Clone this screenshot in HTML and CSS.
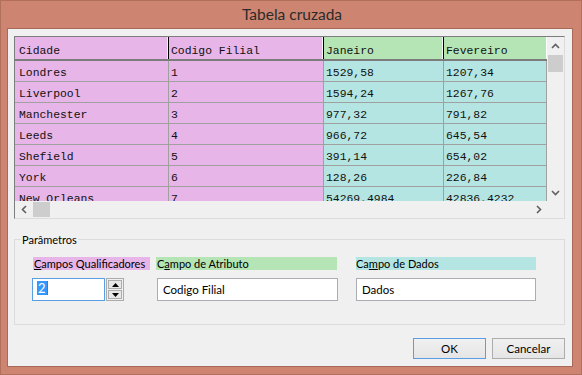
FILE: index.html
```html
<!DOCTYPE html>
<html>
<head>
<meta charset="utf-8">
<link rel="stylesheet" href="styles.css">
</head>
<body>
<div class="window">
  <div class="titlebar">Tabela cruzada</div>
  <div class="client">
    <div class="gridbox">
      <div class="viewport">
        <div class="row head">
          <div class="c pink first">Cidade</div>
          <div class="c pink">Codigo Filial</div>
          <div class="c green">Janeiro</div>
          <div class="c green last">Fevereiro</div>
        </div>
        <div class="row"><div class="c pink first">Londres</div><div class="c pink">1</div><div class="c cyan">1529,58</div><div class="c cyan">1207,34</div></div>
        <div class="row"><div class="c pink first">Liverpool</div><div class="c pink">2</div><div class="c cyan">1594,24</div><div class="c cyan">1267,76</div></div>
        <div class="row"><div class="c pink first">Manchester</div><div class="c pink">3</div><div class="c cyan">977,32</div><div class="c cyan">791,82</div></div>
        <div class="row"><div class="c pink first">Leeds</div><div class="c pink">4</div><div class="c cyan">966,72</div><div class="c cyan">645,54</div></div>
        <div class="row"><div class="c pink first">Shefield</div><div class="c pink">5</div><div class="c cyan">391,14</div><div class="c cyan">654,02</div></div>
        <div class="row"><div class="c pink first">York</div><div class="c pink">6</div><div class="c cyan">128,26</div><div class="c cyan">226,84</div></div>
        <div class="row"><div class="c pink first">New Orleans</div><div class="c pink">7</div><div class="c cyan">54269,4984</div><div class="c cyan">42836,4232</div></div>
      </div>
      <div class="vscroll">
        <div class="sbtn"><svg width="9" height="6" viewBox="0 0 9 6"><polyline points="1,5 4.5,1.5 8,5" fill="none" stroke="#606060" stroke-width="1.6"/></svg></div>
        <div class="vthumb"></div>
        <div class="vtrack"></div>
        <div class="sbtn"><svg width="9" height="6" viewBox="0 0 9 6"><polyline points="1,1 4.5,4.5 8,1" fill="none" stroke="#606060" stroke-width="1.6"/></svg></div>
      </div>
      <div class="hscroll">
        <div class="sbtn"><svg width="6" height="9" viewBox="0 0 6 9"><polyline points="5,1 1.5,4.5 5,8" fill="none" stroke="#606060" stroke-width="1.6"/></svg></div>
        <div class="hthumb"></div>
        <div class="htrack"></div>
        <div class="sbtn"><svg width="6" height="9" viewBox="0 0 6 9"><polyline points="1,1 4.5,4.5 1,8" fill="none" stroke="#606060" stroke-width="1.6"/></svg></div>
      </div>
      <div class="corner"></div>
    </div>

    <fieldset class="group">
      <legend>Parâmetros</legend>
      <div class="fields">
        <div class="lbl lbl1 pink"><u>C</u>ampos Qualificadores</div>
        <div class="lbl lbl2 green">C<u>a</u>mpo de Atributo</div>
        <div class="lbl lbl3 cyan">Ca<u>m</u>po de Dados</div>
        <div class="spin">
          <div class="spinbox"><span class="sel">2</span><span class="caret"></span></div>
          <div class="spinbtns">
            <div class="sb"><svg width="7" height="4" viewBox="0 0 7 4"><polygon points="0,4 3.5,0 7,4" fill="#000"/></svg></div>
            <div class="sb"><svg width="7" height="4" viewBox="0 0 7 4"><polygon points="0,0 3.5,4 7,0" fill="#000"/></svg></div>
          </div>
        </div>
        <div class="tbox tbox2">Codigo Filial</div>
        <div class="tbox tbox3">Dados</div>
      </div>
    </fieldset>

    <div class="buttons">
      <div class="btn default">OK</div>
      <div class="btn">Cancelar</div>
    </div>
  </div>
</div>
</body>
</html>
```

FILE: styles.css
```css
* { box-sizing: border-box; }
html, body { margin: 0; padding: 0; }
body {
  width: 582px;
  height: 375px;
  overflow: hidden;
  font-family: Lato, "Liberation Sans", sans-serif;
  font-size: 11px;
  color: #000;
}
.window {
  width: 582px;
  height: 375px;
  background: #cd8571;
  border: 1px solid #b26f5c;
  display: flex;
  flex-direction: column;
}
.titlebar {
  height: 27px;
  line-height: 27px;
  text-align: center;
  font-size: 15.5px;
  color: #2b2b2b;
  padding-left: 2px;
}
.client {
  margin: 0 8px 7px 6px;
  flex: 1;
  background: #f0f0f0;
  border: 1px solid #a86a58;
  padding: 7px 7px 0 6px;
  display: flex;
  flex-direction: column;
}

/* data grid */
.gridbox {
  width: 551px;
  height: 183px;
  border-top: 1px solid #7d7d7d;
  border-left: 1px solid #7d7d7d;
  border-right: 1px solid #dcdcdc;
  border-bottom: 1px solid #dcdcdc;
  display: grid;
  grid-template-columns: 532px 17px;
  grid-template-rows: 164px 17px;
  background: #f0f0f0;
}
.viewport {
  overflow: hidden;
  background: #fff;
  font-family: "Liberation Mono", monospace;
  font-size: 11.4px;
  color: #111;
}
.row {
  display: grid;
  grid-template-columns: 154px 155px 120px 103px;
  height: 21px;
  border-bottom: 1px solid #a0a0a0;
}
.row .c {
  border-right: 1px solid #a0a0a0;
  padding: 4px 0 0 2px;
  line-height: 16px;
  white-space: nowrap;
  overflow: hidden;
}
.row .c.first { padding-left: 4px; }
.row.head {
  height: 24px;
  border-bottom: 2px solid #7c7c7c;
}
.row.head .c {
  padding-top: 6px;
  border-right: 1px solid #000;
  box-shadow: inset -1px 0 0 #f4f4f4;
}
.row.head .c.last { border-right-color: #fff; box-shadow: none; }
.pink { background: #e7b5e7; }
.green { background: #b5e4b5; }
.cyan { background: #b5e5e2; }

.vscroll {
  display: flex;
  flex-direction: column;
  background: #f0f0f0;
}
.sbtn {
  width: 17px;
  height: 17px;
  flex: none;
  display: flex;
  align-items: center;
  justify-content: center;
}
.vthumb {
  margin: 1px 1px 0 1px;
  width: 15px;
  height: 17px;
  background: #cdcdcd;
  flex: none;
}
.vtrack { flex: 1; }
.hscroll {
  display: flex;
  background: #f0f0f0;
}
.hthumb {
  margin: 1px 0 1px 1px;
  width: 17px;
  height: 15px;
  background: #cdcdcd;
  flex: none;
}
.htrack { flex: 1; }
.corner { background: #f0f0f0; }

/* group box */
.group {
  margin: 13px 0 0 0;
  width: 551px;
  border: 1px solid #dcdcdc;
  padding: 10px 0 23px 0;
  min-width: 0;
}
.group legend {
  margin-left: 6px;
  padding: 0 1px;
  line-height: 15px;
  color: #000;
}
.fields {
  padding-left: 17px;
  display: grid;
  grid-template-columns: 124px 200px 180px;
  grid-template-rows: 13px 23px;
  row-gap: 8px;
}
.lbl {
  line-height: 13px;
  white-space: nowrap;
  overflow: hidden;
}
.lbl u { text-decoration-thickness: 1px; text-underline-offset: 1px; }
.lbl1 { margin-left: 1px; width: 117px; padding-left: 1px; }
.lbl2 { width: 181px; padding-left: 1px; }
.lbl3 { width: 180px; }

.spin { display: flex; }
.spinbox {
  width: 73px;
  height: 23px;
  border: 1px solid #5a9fe6;
  background: #fff;
  padding: 2px 0 0 4px;
  display: flex;
  align-items: flex-start;
}
.sel {
  background: #3399ff;
  color: #fff;
  height: 14px;
  line-height: 14px;
  padding: 0 1px;
  font-size: 13px;
}
.caret {
  width: 1px;
  height: 14px;
  background: #c05a10;
}
.spinbtns {
  margin-left: 1px;
  width: 18px;
  height: 23px;
  border: 1px solid #ababab;
  padding: 1px;
  display: flex;
  flex-direction: column;
  gap: 1px;
  background: #f0f0f0;
}
.sb {
  flex: 1;
  border: 1px solid #acacac;
  background: #e8e8e8;
  display: flex;
  align-items: center;
  justify-content: center;
}
.tbox {
  height: 23px;
  border: 1px solid #abadb3;
  background: #fff;
  padding: 0 0 0 5px;
  line-height: 21px;
  font-size: 11.5px;
}
.tbox2 { width: 181px; margin-left: 1px; }
.tbox3 { width: 180px; }

.buttons {
  margin-top: 13px;
  display: flex;
  justify-content: flex-end;
  gap: 6px;
}
.btn {
  width: 73px;
  height: 21px;
  border: 1px solid #adadad;
  background: linear-gradient(#f0f0f0, #e5e5e5);
  text-align: center;
  line-height: 19px;
  font-size: 11.5px;
}
.btn.default { border-color: #5a9fe6; }
```
